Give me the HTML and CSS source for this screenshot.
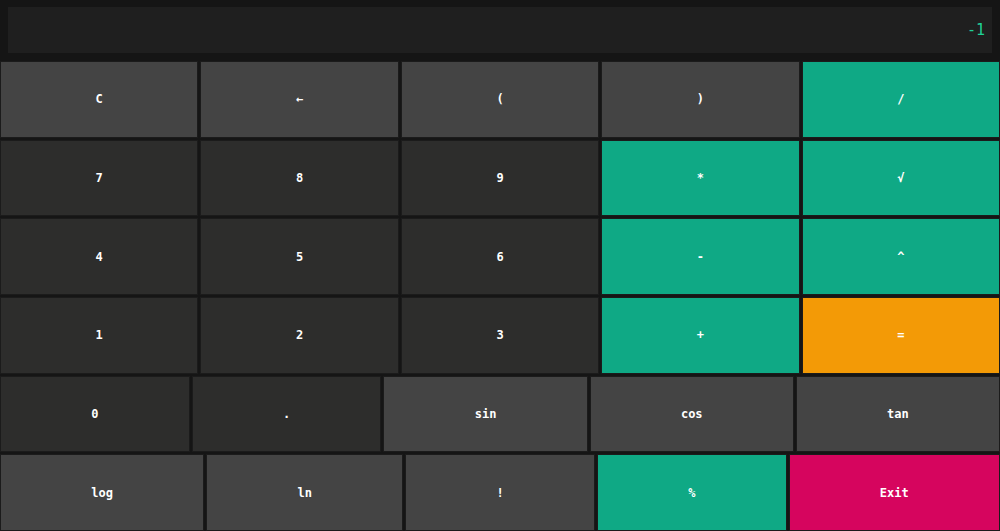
FILE: index.html
```html
<!DOCTYPE html>
<html lang="en">
<head>
    <meta charset="UTF-8">
    <meta name="viewport" content="width=device-width, initial-scale=1.0">
    <title>Calculator</title>
    <link rel="stylesheet" href="styles.css">
</head>
<body>
    <div class="calc">
        <div class="display">-1</div>
        <div class="keys">
            <div class="row">
                <button class="key fn">C</button>
                <button class="key fn">&larr;</button>
                <button class="key fn">(</button>
                <button class="key fn">)</button>
                <button class="key op">/</button>
            </div>
            <div class="row">
                <button class="key">7</button>
                <button class="key">8</button>
                <button class="key">9</button>
                <button class="key op">*</button>
                <button class="key op">&radic;</button>
            </div>
            <div class="row">
                <button class="key">4</button>
                <button class="key">5</button>
                <button class="key">6</button>
                <button class="key op">-</button>
                <button class="key op">^</button>
            </div>
            <div class="row">
                <button class="key">1</button>
                <button class="key">2</button>
                <button class="key">3</button>
                <button class="key op">+</button>
                <button class="key eq">=</button>
            </div>
            <div class="row">
                <button class="key">0</button>
                <button class="key">.</button>
                <button class="key fn">sin</button>
                <button class="key fn">cos</button>
                <button class="key fn">tan</button>
            </div>
            <div class="row">
                <button class="key fn">log</button>
                <button class="key fn">ln</button>
                <button class="key fn">!</button>
                <button class="key op">%</button>
                <button class="key exit">Exit</button>
            </div>
        </div>
    </div>
</body>
</html>
```

FILE: styles.css
```css
html, body {
    height: 100%;
}
body {
    margin: 0;
    background-color: #151515;
    font-family: "DejaVu Sans Mono", "Liberation Mono", monospace;
}
.calc {
    height: 100%;
    display: flex;
    flex-direction: column;
}
.display {
    margin: 7px 8px 8px 8px;
    height: 46px;
    padding-right: 7px;
    background-color: #1f1f1f;
    color: #1fcf95;
    font-size: 15px;
    line-height: 46px;
    text-align: right;
}
.keys {
    flex: 1;
    display: flex;
    flex-direction: column;
    gap: 2px;
}
.row {
    flex: 1;
    display: flex;
    gap: 2px;
}
.key {
    flex: 1 1 auto;
    padding: 0;
    border: 1px solid #1b1b1b;
    background-color: #2d2d2c;
    color: #ffffff;
    font-family: inherit;
    font-size: 12px;
    font-weight: bold;
    cursor: pointer;
}
.key.fn {
    background-color: #444444;
}
.key.op {
    background-color: #0fa985;
}
.key.eq {
    background-color: #f39a06;
}
.key.exit {
    background-color: #d6055e;
}
```
